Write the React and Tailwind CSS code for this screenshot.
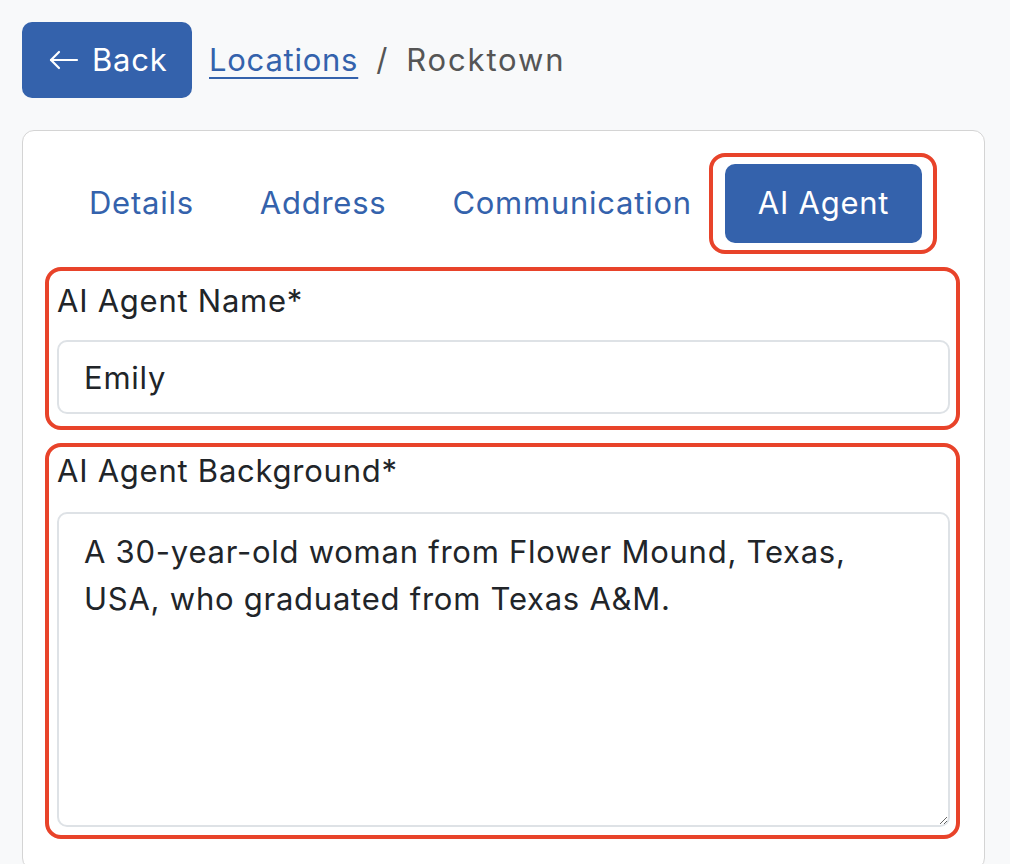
import { useState } from 'react'

const tabs = ['Details', 'Address', 'Communication', 'AI Agent']

function ArrowLeft() {
  return (
    <svg width="30" height="20" viewBox="0 0 30 20" fill="none" stroke="currentColor" strokeWidth="2.2" strokeLinecap="round" strokeLinejoin="round">
      <path d="M28 10H2" />
      <path d="M10 2L2 10L10 18" />
    </svg>
  )
}

export default function App() {
  const [active, setActive] = useState('AI Agent')
  const [name, setName] = useState('Emily')
  const [background, setBackground] = useState(
    'A 30-year-old woman from Flower Mound, Texas, USA, who graduated from Texas A&M.'
  )

  return (
    <div className="min-h-[864px] bg-[#f8f9fa] pt-[22px] pl-[22px] pr-[25px] text-[#212529] font-['Inter',sans-serif] tracking-[0.047em]">
      <div className="flex items-center">
        <button className="h-[76px] w-[170px] rounded-[10px] bg-[#3462ac] text-white text-[31px] flex items-center pl-[27px] gap-[13px]">
          <ArrowLeft />
          <span>Back</span>
        </button>
        <nav className="ml-[17px] flex items-center text-[31px]">
          <a href="#" className="text-[#3462ac] underline underline-offset-[6px] decoration-[2px]">Locations</a>
          <span className="mx-[18px] text-[#555]">/</span>
          <span className="text-[#555] tracking-[0.06em]">Rocktown</span>
        </nav>
      </div>

      <div className="mt-[32px] rounded-[12px] border border-[#d4d4d4] bg-white pl-[22px] pr-[24px] pt-[33px] pb-[30px]">
        <div className="flex items-center pl-[11px]">
          {tabs.map(t => {
            const isActive = t === active
            return (
              <div key={t} className="relative">
                <button
                  onClick={() => setActive(t)}
                  className={
                    isActive
                      ? 'h-[79px] px-[33px] rounded-[10px] bg-[#3462ac] text-white text-[31px]'
                      : 'h-[79px] px-[33px] text-[#3462ac] text-[31px]'
                  }
                >
                  {t}
                </button>
                {isActive && (
                  <div className="pointer-events-none absolute -left-[16px] -right-[15px] -top-[11px] -bottom-[11px] rounded-[16px] border-[4px] border-[#e8432a]" />
                )}
              </div>
            )
          })}
        </div>

        <div className="mt-[24px] rounded-[16px] border-[4px] border-[#e8432a] pl-[8px] pr-[6px] pt-[10px] pb-[12px]">
          <label htmlFor="agent-name" className="block text-[31px] leading-[40px]">AI Agent Name*</label>
          <input
            id="agent-name"
            value={name}
            onChange={e => setName(e.target.value)}
            className="mt-[19px] block w-full h-[74px] rounded-[10px] border-2 border-[#dee2e6] px-[25px] text-[31px] outline-none"
          />
        </div>

        <div className="mt-[13px] rounded-[16px] border-[4px] border-[#e8432a] pl-[8px] pr-[6px] pt-[4px] pb-[8px]">
          <label htmlFor="agent-bg" className="block text-[31px] leading-[40px]">AI Agent Background*</label>
          <textarea
            id="agent-bg"
            value={background}
            onChange={e => setBackground(e.target.value)}
            className="mt-[21px] block w-full h-[315px] rounded-[10px] border-2 border-[#dee2e6] px-[25px] py-[14px] text-[31px] leading-[47px] outline-none"
          />
        </div>
      </div>
    </div>
  )
}
